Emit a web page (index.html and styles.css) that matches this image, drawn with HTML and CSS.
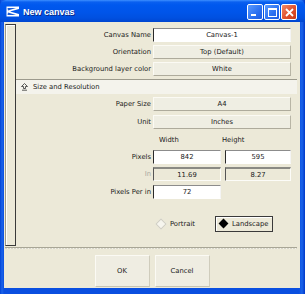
FILE: index.html
```html
<!DOCTYPE html>
<html>
<head>
<meta charset="utf-8">
<link rel="stylesheet" href="styles.css">
</head>
<body>
<div class="window">
  <div class="titlebar">
    <svg class="appicon" width="14" height="11" viewBox="0 0 14 11">
      <path d="M0.5 0.5 L13 0.5 L13 3 L4 5.5 L13 8 L13 10.5 L0.5 10.5 Z" fill="#ffffff"/>
      <path d="M1.5 2 L10 2 L2 4.5 Z" fill="#1e5fd8"/>
      <path d="M1.5 9 L10 9 L2 6.5 Z" fill="#1e5fd8"/>
    </svg>
    <span class="title">New canvas</span>
    <div class="controls">
      <span class="ctl min"><i></i></span>
      <span class="ctl max"><i></i></span>
      <span class="ctl close">
        <svg width="9" height="9" viewBox="0 0 9 9"><path d="M1 1 L8 8 M8 1 L1 8" stroke="#fff" stroke-width="1.8"/></svg>
      </span>
    </div>
  </div>
  <div class="client">
    <div class="main">
      <div class="strip"></div>
      <div class="panel">
        <div class="form general">
          <span class="label">Canvas Name</span>
          <span class="field input span">Canvas-1</span>
          <span class="label">Orientation</span>
          <span class="field btn span">Top (Default)</span>
          <span class="label">Background layer color</span>
          <span class="field btn span">White</span>
        </div>
        <div class="section-head">
          <svg class="sicon" width="7" height="8" viewBox="0 0 7 8">
            <path d="M3.5 0.5 L6.5 3.5 L4.5 3.5 L4.5 5.5 L2.5 5.5 L2.5 3.5 L0.5 3.5 Z" fill="none" stroke="#333" stroke-width="0.8"/>
            <path d="M1 7.2 L6 7.2" stroke="#333" stroke-width="0.8"/>
          </svg>
          <span>Size and Resolution</span>
        </div>
        <div class="form size">
          <span class="label">Paper Size</span>
          <span class="field btn span">A4</span>
          <span class="label">Unit</span>
          <span class="field btn span">Inches</span>
          <span class="label"></span>
          <span class="colhead w">Width</span>
          <span class="colhead h">Height</span>
          <span class="label">Pixels</span>
          <span class="field input">842</span>
          <span class="field input c4">595</span>
          <span class="label dim">In</span>
          <span class="field ro">11.69</span>
          <span class="field ro c4">8.27</span>
          <span class="label">Pixels Per in</span>
          <span class="field input">72</span>
        </div>
        <div class="orient">
          <span class="radio"><i class="diamond off"></i>Portrait</span>
          <span class="radio sel"><i class="diamond on"></i>Landscape</span>
        </div>
      </div>
    </div>
    <div class="sep"></div>
    <div class="buttons">
      <span class="pbtn">OK</span>
      <span class="pbtn">Cancel</span>
    </div>
  </div>
</div>
</body>
</html>
```

FILE: styles.css
```css
html, body {
  margin: 0;
  padding: 0;
  background: #ffffff;
}
body {
  width: 305px;
  height: 294px;
  overflow: hidden;
  font-family: "DejaVu Sans", "Liberation Sans", sans-serif;
  font-size: 6.8px;
  color: #1a1a1a;
}
.window {
  width: 305px;
  height: 294px;
  box-sizing: border-box;
  background: linear-gradient(to right, #0042d6 0, #1a63ea 2px, #0a4fe0 4px, #0a4fe0 299px, #1a63ea 302px, #0038c8 305px);
  padding: 0 5px 6px 4px;
  display: flex;
  flex-direction: column;
}
.titlebar {
  height: 22px;
  margin: 0 -5px 0 -4px;
  padding: 0 5px 0 5px;
  display: flex;
  align-items: center;
  background: linear-gradient(to bottom, #3d8fff 0, #0a60f0 2px, #0058ee 5px, #0055ea 12px, #0050e0 18px, #0046d0 22px);
  border-radius: 6px 6px 0 0;
}
.appicon {
  margin-left: 1px;
  margin-top: 1px;
}
.title {
  margin-left: 3px;
  font-family: "Liberation Sans", sans-serif;
  font-weight: bold;
  font-size: 9px;
  color: #ffffff;
  text-shadow: 1px 1px 0 #0a2a8a;
  margin-top: 1px;
}
.controls {
  margin-left: auto;
  display: flex;
  gap: 1px;
  margin-right: 3px;
  margin-top: 2px;
}
.ctl {
  width: 14px;
  height: 14px;
  border: 1px solid #ffffff;
  border-radius: 2px;
  background: linear-gradient(135deg, #5a9bff, #2a6ff0 60%, #1c5ae0);
  display: flex;
  align-items: center;
  justify-content: center;
  position: relative;
}
.ctl.min i {
  width: 5px;
  height: 2px;
  background: #fff;
  margin-top: 6px;
  margin-right: 3px;
}
.ctl.max i {
  width: 7px;
  height: 6px;
  border: 1px solid #fff;
  border-top-width: 2px;
}
.ctl.close {
  background: linear-gradient(135deg, #f08a6a, #e0502c 55%, #c83a18);
}
.client {
  flex: 1;
  background: #ece9d8;
  display: flex;
  flex-direction: column;
}
.main {
  display: flex;
  height: 222px;
  margin-top: 2px;
}
.strip {
  width: 9px;
  margin-left: 1px;
  border: 1px solid #3a3a3a;
  border-left-color: #9c9a8c;
  box-shadow: inset 1px 1px 0 #ffffff;
}
.panel {
  flex: 1;
  margin-right: 3px;
  display: flex;
  flex-direction: column;
}
.form {
  display: grid;
  grid-template-columns: 137px 68px 4px 66px;
  grid-auto-rows: 14px;
  align-items: center;
}
.general {
  row-gap: 3px;
  padding-top: 4px;
}
.size {
  row-gap: 3.5px;
  padding-top: 3px;
}
.label {
  text-align: right;
  padding-right: 2px;
  white-space: nowrap;
  grid-column: 1;
}
.label.dim {
  color: #a8a8a0;
}
.field {
  box-sizing: border-box;
  height: 14px;
  display: flex;
  align-items: center;
  justify-content: center;
  grid-column: 2;
}
.field.span {
  grid-column: 2 / 5;
}
.field.c4 {
  grid-column: 4;
}
.input {
  background: #ffffff;
  border-top: 1px solid #8c8c8c;
  border-left: 1px solid #2a2a2a;
  border-right: 1px solid #f4f4f4;
  border-bottom: 1px solid #ffffff;
}
.btn {
  background: #efeee3;
  border: 1px solid;
  border-color: #fbfaf4 #b8b5a5 #aeab9c #fbfaf4;
}
.ro {
  background: #ece9d8;
  border-top: 2px solid #8a8a84;
  border-left: 1px solid #555;
  border-right: 1px solid #fcfcf8;
  border-bottom: 1px solid #fcfcf8;
}
.colhead.w {
  grid-column: 2;
  padding-left: 6px;
  padding-top: 2px;
}
.colhead.h {
  grid-column: 3 / 5;
  padding-left: 1px;
  padding-top: 2px;
}
.section-head {
  margin-top: 3px;
  height: 15px;
  box-sizing: border-box;
  border-top: 1px solid #9c9a8c;
  background: #f4f3ec;
  display: flex;
  align-items: center;
  padding-left: 5px;
  gap: 5px;
}
.sicon {
  margin-top: -1px;
}
.orient {
  display: flex;
  align-items: center;
  margin-top: 17px;
  padding-left: 139px;
}
.radio {
  display: flex;
  align-items: center;
  gap: 3px;
  height: 16px;
  box-sizing: border-box;
}
.radio.sel {
  margin-left: 20px;
  border: 1px solid #3a3a3a;
  padding: 0 3px 0 2px;
  box-shadow: inset 1px 1px 0 #ffffff;
}
.diamond {
  width: 6px;
  height: 6px;
  transform: rotate(45deg);
  display: block;
  margin: 0 2px;
}
.diamond.off {
  border: 1px solid #d0cec4;
  background: #f6f5ee;
}
.diamond.on {
  background: #000000;
  width: 7px;
  height: 7px;
}
.sep {
  margin-top: 1px;
  margin-left: 1px;
  margin-right: 3px;
  height: 1px;
  border-top: 1px solid #a8a696;
  background: repeating-linear-gradient(to right, #d8d6c8 0 2px, #f4f3ec 2px 3px);
}
.buttons {
  display: flex;
  justify-content: center;
  gap: 5px;
  padding-top: 6px;
}
.pbtn {
  width: 55px;
  height: 32px;
  box-sizing: border-box;
  display: flex;
  align-items: center;
  justify-content: center;
  background: #efede2;
  border: 1px solid;
  border-color: #fbfaf4 #cfccbc #c6c3b3 #fbfaf4;
}
```
